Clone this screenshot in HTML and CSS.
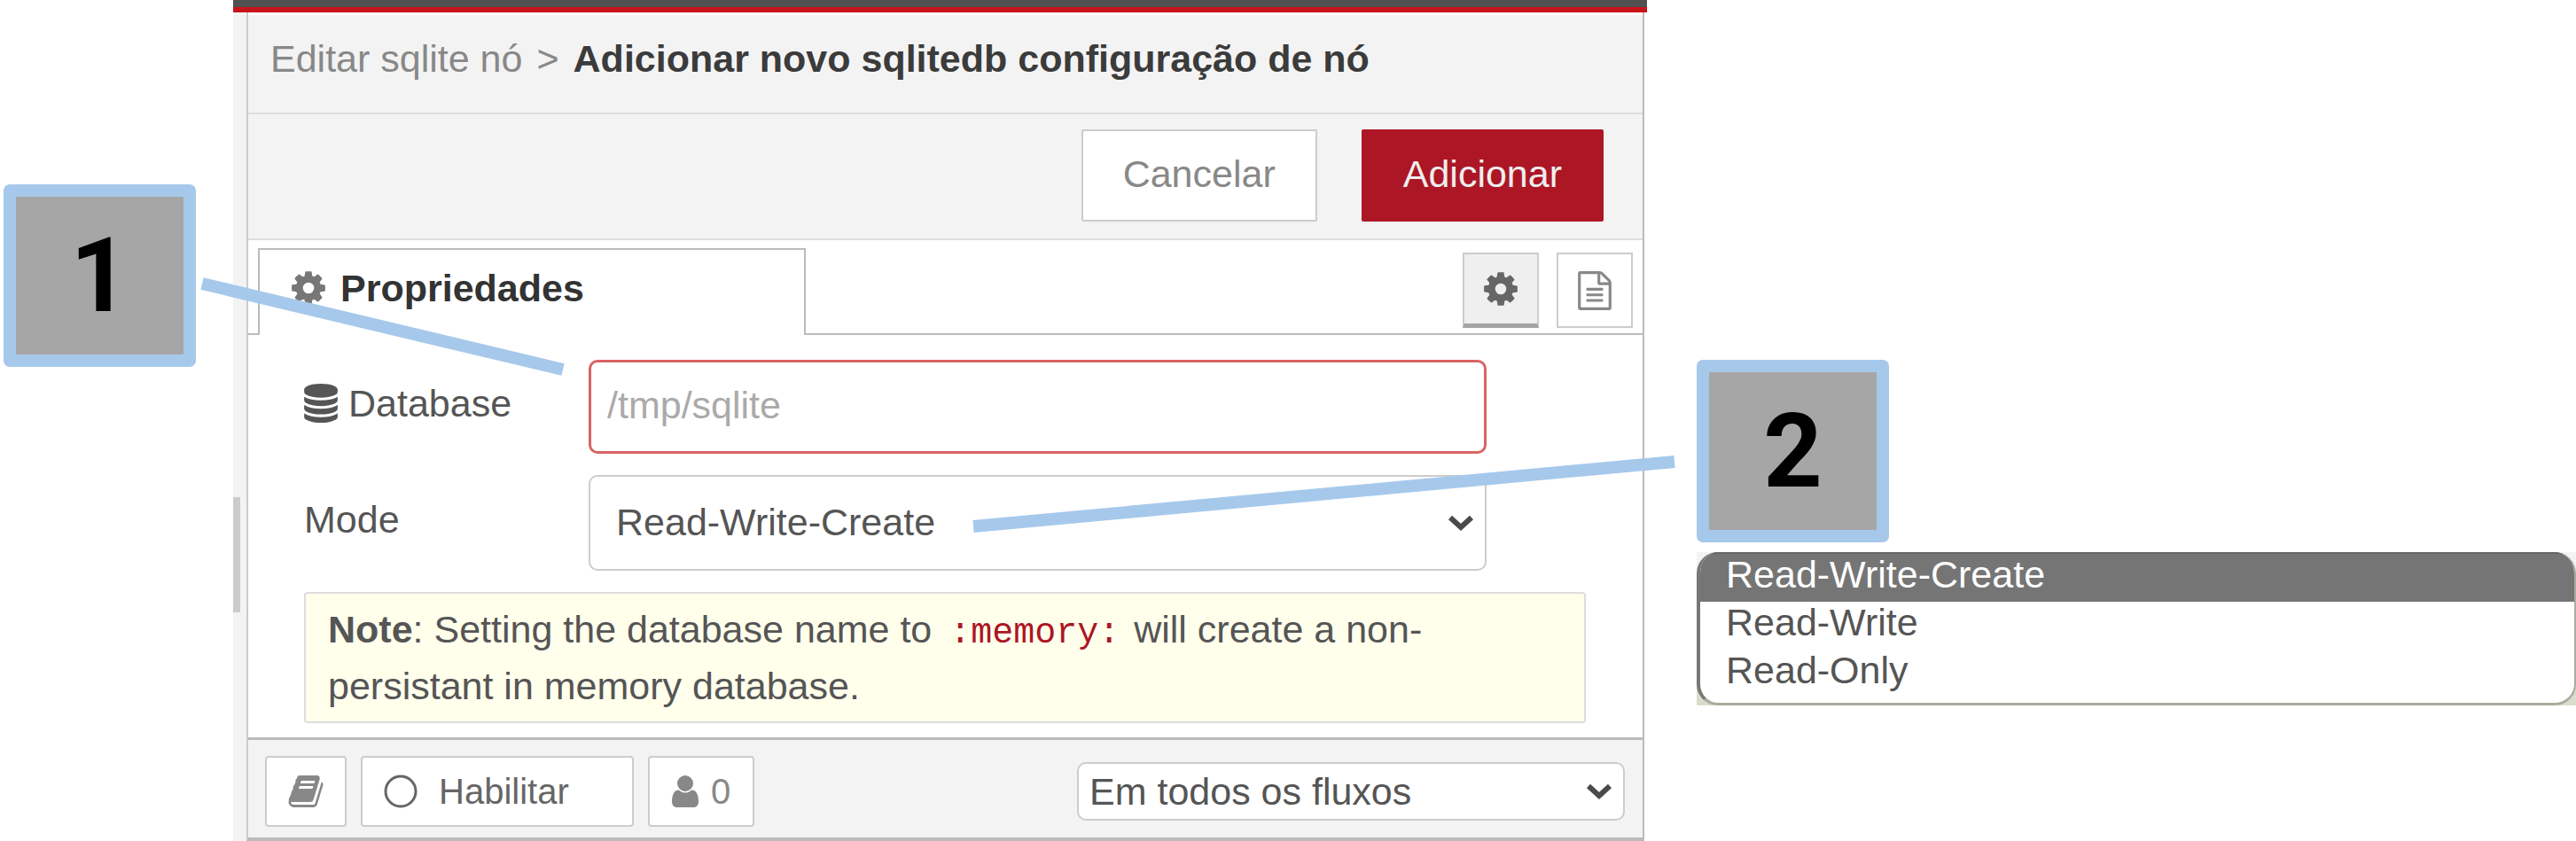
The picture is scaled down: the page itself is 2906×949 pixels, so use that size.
FILE: index.html
```html
<!DOCTYPE html>
<html lang="pt-BR">
<head>
<meta charset="utf-8">
<meta name="viewport" content="width=device-width, initial-scale=1">
<title>Adicionar novo sqlitedb configuração de nó</title>
<link rel="stylesheet" href="styles.css">
</head>
<body>
<svg class="defs" aria-hidden="true">
  <symbol id="gear" viewBox="0 0 1792 1792"><path d="M1152 896q0-106-75-181t-181-75-181 75-75 181 75 181 181 75 181-75 75-181zm512-109v222q0 12-8 23t-20 13l-185 28q-19 54-39 91 35 50 107 138 10 12 10 25t-9 23q-27 37-99 108t-94 71q-12 0-26-9l-138-108q-44 23-91 38-16 136-29 186-7 28-36 28h-222q-14 0-24.500-8.500t-11.500-21.500l-28-184q-49-16-90-37l-141 107q-10 9-25 9-14 0-25-11-126-114-165-168-7-10-7-23 0-12 8-23 15-21 51-66.500t54-70.500q-27-50-41-99l-183-27q-13-2-21-12.500t-8-23.500v-222q0-12 8-23t19-13l186-28q14-46 39-92-40-57-107-138-10-12-10-24 0-10 9-23 26-36 98.500-107.500t94.500-71.500q13 0 26 10l138 107q44-23 91-38 16-136 29-186 7-28 36-28h222q14 0 24.500 8.500t11.500 21.500l28 184q49 16 90 37l142-107q9-9 24-9 13 0 25 10 129 119 165 170 7 8 7 22 0 12-8 23-15 21-51 66.500t-54 70.500q26 50 41 98l183 28q13 2 21 12.500t8 23.500z"/></symbol>
  <symbol id="database" viewBox="0 0 1792 1792"><path d="M896 768q237 0 443-43t325-127v170q0 69-103 128t-280 93.500-385 34.500-385-34.500-280-93.500-103-128v-170q119 84 325 127t443 43zm0 768q237 0 443-43t325-127v170q0 69-103 128t-280 93.500-385 34.500-385-34.500-280-93.500-103-128v-170q119 84 325 127t443 43zm0-384q237 0 443-43t325-127v170q0 69-103 128t-280 93.500-385 34.500-385-34.500-280-93.500-103-128v-170q119 84 325 127t443 43zm0-1152q208 0 385 34.500t280 93.500 103 128v128q0 69-103 128t-280 93.500-385 34.500-385-34.500-280-93.500-103-128v-128q0-69 103-128t280-93.500 385-34.500z"/></symbol>
  <symbol id="file" viewBox="0 0 1792 1792"><path d="M1596 380q28 28 48 76t20 88v1152q0 40-28 68t-68 28h-1344q-40 0-68-28t-28-68v-1600q0-40 28-68t68-28h896q40 0 88 20t76 48zm-444-244v376h376q-10-29-22-41l-313-313q-12-12-41-22zm384 1528v-1024h-416q-40 0-68-28t-28-68v-416h-768v1536h1280zm-1024-864q0-14 9-23t23-9h704q14 0 23 9t9 23v64q0 14-9 23t-23 9h-704q-14 0-23-9t-9-23v-64zm736 224q14 0 23 9t9 23v64q0 14-9 23t-23 9h-704q-14 0-23-9t-9-23v-64q0-14 9-23t23-9h704zm0 256q14 0 23 9t9 23v64q0 14-9 23t-23 9h-704q-14 0-23-9t-9-23v-64q0-14 9-23t23-9h704z"/></symbol>
  <symbol id="book" viewBox="0 0 1792 1792"><path d="M1703 478q40 57 18 129l-275 906q-19 64-76.500 107.500t-122.500 43.500h-923q-77 0-148.500-53.500t-99.500-131.500q-24-67-2-127 0-4 3-27t4-37q1-8-3-21.500t-3-19.500q2-11 8-21t16.500-23.500 16.500-23.500q23-38 45-91.500t30-91.500q3-10 .5-30t-.5-28q3-11 17-28t17-23q21-36 42-92t25-90q1-9-2.500-32t.5-28q4-13 22-30.500t22-22.500q19-26 42.500-84.500t27.500-96.500q1-8-3-25.500t-2-26.500q2-8 9-18t18-23 17-21q8-12 16.500-30.500t15-35 16-36 19.500-32 26.500-23.500 36-11.500 47.500 5.500l-1 3q38-9 51-9h761q74 0 114 56t18 130l-274 906q-36 119-71.500 153.500t-128.500 34.500h-869q-27 0-38 15-11 16-1 43 24 70 144 70h923q29 0 56-15.500t35-41.500l300-987q7-22 5-57 38 15 59 43zm-1064 2q-4 13 2 22.500t20 9.500h608q13 0 25.500-9.500t16.500-22.500l21-64q4-13-2-22.500t-20-9.500h-608q-13 0-25.500 9.500t-16.500 22.500zm-83 256q-4 13 2 22.500t20 9.500h608q13 0 25.500-9.500t16.500-22.500l21-64q4-13-2-22.500t-20-9.500h-608q-13 0-25.500 9.500t-16.500 22.500z"/></symbol>
  <symbol id="user" viewBox="256 0 1280 1792"><path d="M1536 1399q0 109-62.500 187t-150.500 78h-854q-88 0-150.500-78t-62.500-187q0-85 8.500-160.500t31.500-152 58.500-131 94-89 134.500-34.500q131 128 313 128t313-128q76 0 134.500 34.500t94 89 58.500 131 31.500 152 8.500 160.500zm-256-887q0 159-112.500 271.500t-271.500 112.500-271.500-112.500-112.500-271.500 112.500-271.500 271.500-112.500 271.500 112.500 112.500 271.500z"/></symbol>
  <symbol id="circle" viewBox="0 0 38 38"><circle cx="19" cy="19" r="17" fill="none" stroke="currentColor" stroke-width="3"/></symbol>
  <symbol id="chevron" viewBox="0 0 30 20"><path d="M3 4l12 11 12-11" fill="none" stroke="currentColor" stroke-width="6"/></symbol>
</svg>

<main class="figure">
  <div class="side side-left"><div class="callout">1</div></div>

  <section class="editor">
    <div class="topbar"></div>
    <div class="editor-body">
      <div class="gutter"><span class="grip"></span></div>
      <form class="tray">
        <header class="tray-header"><a class="crumb" href="#">Editar sqlite nó</a><span>&gt;</span><h1>Adicionar novo sqlitedb configuração de nó</h1></header>
        <div class="tray-actions">
          <button type="button" class="btn">Cancelar</button>
          <button type="button" class="btn primary">Adicionar</button>
        </div>
        <nav class="tabs">
          <button type="button" class="tab"><svg class="icon"><use href="#gear"/></svg>Propriedades</button>
          <div class="tab-tools">
            <button type="button" class="tool selected" aria-label="Propriedades"><svg class="icon"><use href="#gear"/></svg></button>
            <button type="button" class="tool" aria-label="Descrição"><svg class="icon"><use href="#file"/></svg></button>
          </div>
        </nav>
        <div class="fields">
          <div class="row">
            <label for="db"><svg class="icon"><use href="#database"/></svg>Database</label>
            <input id="db" class="control invalid" type="text" placeholder="/tmp/sqlite">
          </div>
          <div class="row">
            <label for="mode">Mode</label>
            <div class="select">
              <select id="mode" class="control">
                <option>Read-Write-Create</option><option>Read-Write</option><option>Read-Only</option>
              </select>
              <svg class="chevron"><use href="#chevron"/></svg>
            </div>
          </div>
          <p class="note"><b>Note</b>: Setting the database name to <code>:memory:</code> will create a non-persistant in memory database.</p>
        </div>
        <footer class="tray-footer">
          <button type="button" class="small book" aria-label="Ajuda"><svg class="icon"><use href="#book"/></svg></button>
          <button type="button" class="small enable"><svg class="ring"><use href="#circle"/></svg>Habilitar</button>
          <button type="button" class="small users"><svg class="person"><use href="#user"/></svg>0</button>
          <div class="select scope">
            <select class="control" aria-label="Escopo"><option>Em todos os fluxos</option></select>
            <svg class="chevron"><use href="#chevron"/></svg>
          </div>
        </footer>
      </form>
    </div>
  </section>

  <aside class="side side-right">
    <div class="callout">2</div>
    <div class="popup">
      <ul class="options" role="listbox" aria-label="Mode">
        <li role="option" aria-selected="true">Read-Write-Create</li>
        <li role="option" aria-selected="false">Read-Write</li>
        <li role="option" aria-selected="false">Read-Only</li>
      </ul>
    </div>
  </aside>

  <svg class="connectors" viewBox="0 0 2906 949" preserveAspectRatio="none" aria-hidden="true">
    <path d="M228 320L635 417M1098 594L1889 521"/>
  </svg>
</main>
</body>
</html>
```
FILE: styles.css
```css
* { box-sizing: border-box; }

body {
  margin: 0;
  background: #fff;
  color: #555;
  font: 43px/48px "Liberation Sans", Arial, sans-serif;
}

button, input, select { font: inherit; color: inherit; margin: 0; }
button { display: flex; align-items: center; justify-content: center; padding: 0; }

.defs { position: absolute; width: 0; height: 0; }
.icon { width: 44px; height: 44px; fill: currentColor; flex: none; }

.figure {
  position: relative;
  display: grid;
  grid-template-columns: 263fr 1595fr 1048fr;
  min-height: 100vh;
}

/* Numbered callouts */
.side-left { padding: 208px 0 0 4px; }
.side-right { padding: 406px 0 0 56px; }
.callout {
  display: flex;
  align-items: center;
  justify-content: center;
  width: 217px;
  height: 206px;
  border: 14px solid #a6c9eb;
  border-radius: 7px;
  background: #a6a6a6;
  color: #000;
  font: bold 116px/120px Roboto, sans-serif;
}
.connectors {
  position: absolute;
  inset: 0;
  width: 100%;
  height: 100%;
  fill: none;
  stroke: #a6c9eb;
  stroke-width: 14px;
  pointer-events: none;
}

/* Editor tray */
.editor { display: flex; flex-direction: column; min-width: 0; }
.topbar { height: 14px; background: #505050; border-bottom: 6px solid #c7131a; }
.editor-body { flex: 1; display: flex; padding-right: 3px; }
.gutter {
  width: 15px;
  padding-top: 547px;
  background: #f3f3f3;
}
.grip { display: block; width: 8px; height: 130px; background: #ccc; }
.tray {
  flex: 1;
  min-width: 0;
  display: flex;
  flex-direction: column;
  border: solid #bbb;
  border-width: 0 2px 4px;
  border-left-color: #ccc;
}

.tray-header {
  display: flex;
  gap: 16px;
  padding: 25px 24px 37px 25px;
  background: #f3f3f3;
  border-top: 3px solid #fcfcfc;
  border-bottom: 2px solid #ddd;
  color: #888;
  white-space: nowrap;
}
.tray-header h1 { margin: 0; font: inherit; font-weight: bold; color: #3b3b3b; }
.crumb { color: inherit; text-decoration: none; }

.tray-actions {
  display: flex;
  justify-content: flex-end;
  gap: 50px;
  padding: 17px 44px 19px;
  background: #f3f3f3;
  border-bottom: 2px solid #ddd;
}
.btn {
  height: 104px;
  padding: 0 45px 4px;
  background: #fff;
  border: 2px solid #ccc;
  border-radius: 2px;
  color: #888;
}
.primary { background: #ad1625; border-color: #ad1625; color: #eee; }

.tabs {
  display: flex;
  justify-content: space-between;
  padding: 9px 11px 0;
  border-bottom: 2px solid #bbb;
}
.tab {
  justify-content: flex-start;
  gap: 14px;
  width: 618px;
  height: 98px;
  margin-bottom: -2px;
  padding: 0 33px 10px;
  background: #fff;
  border: 2px solid #bbb;
  border-bottom: 0;
  font-weight: bold;
  color: #333;
}
.tab .icon { color: #777; }
.tab-tools { display: flex; gap: 20px; padding-top: 5px; }
.tool { width: 86px; height: 85px; background: #fff; border: 2px solid #ccc; color: #888; }
.tool.selected { background: #efefef; border-bottom: 5px solid #a3a3a3; color: #666; }

.fields {
  display: flex;
  flex-direction: column;
  gap: 24px;
  padding: 28px 64px 16px 63px;
}
.row { display: flex; align-items: center; padding-right: 112px; }
.row label { flex: none; display: flex; align-items: center; gap: 9px; width: 321px; padding-bottom: 8px; }
.row label .icon { margin-left: -3px; }
.row > .control, .row > .select { flex: 1; min-width: 0; }
.control {
  display: block;
  width: 100%;
  height: 106px;
  padding: 0 18px 4px;
  background: #fff;
  border: 2px solid #ccc;
  border-radius: 10px;
}
.invalid { border-color: #d96464; border-width: 3px; }
.control::placeholder { color: #aaa; opacity: 1; }
.select { position: relative; }
.select .control { height: 108px; padding: 0 29px 2px; appearance: none; }
.select .chevron {
  position: absolute;
  right: 14px;
  top: 50%;
  width: 30px;
  height: 20px;
  margin-top: -10px;
  color: #4a4a4a;
  pointer-events: none;
}
.note {
  margin: 0;
  padding: 8px 25px 8px;
  background: #ffffec;
  border: 2px solid #ddd;
  border-radius: 4px;
  line-height: 64px;
}
.note code { padding: 0 4px 0 8px; font: 40px/40px "Liberation Mono", monospace; color: #ad1625; }

.tray-footer {
  flex: 1;
  display: flex;
  align-items: center;
  gap: 16px;
  padding: 15px 20px 10px 19px;
  background: #f3f3f3;
  border-top: 3px solid #bbb;
}
.small {
  height: 80px;
  background: #fff;
  border: 2px solid #ccc;
  border-radius: 4px;
  font-size: 40px;
  color: #666;
}
.small .icon { width: 42px; height: 42px; }
.book { width: 92px; color: #888; }
.enable { justify-content: flex-start; gap: 24px; width: 308px; padding: 0 24px; }
.ring { width: 38px; height: 38px; }
.users { gap: 14px; width: 120px; color: #888; }
.person { width: 30px; height: 42px; fill: currentColor; }
.scope { width: 618px; margin-left: auto; }
.scope .control { height: 66px; padding: 0 12px; }

/* Expanded option list */
.popup {
  margin-top: 11px;
  background: linear-gradient(#f3f3f3 50%, #dcdccd 50%);
}
.options {
  margin: 0;
  padding: 0 0 6px;
  list-style: none;
  overflow: hidden;
  background: #fff;
  border: solid #aaaa9f;
  border-width: 0 2px 3px 4px;
  border-left-color: #777;
  border-radius: 24px;
}
.options li { padding: 0 29px 8px; line-height: 46px; }
.options [aria-selected="true"] { background: #757575; border-top: 2px solid #666; color: #fff; }
```
